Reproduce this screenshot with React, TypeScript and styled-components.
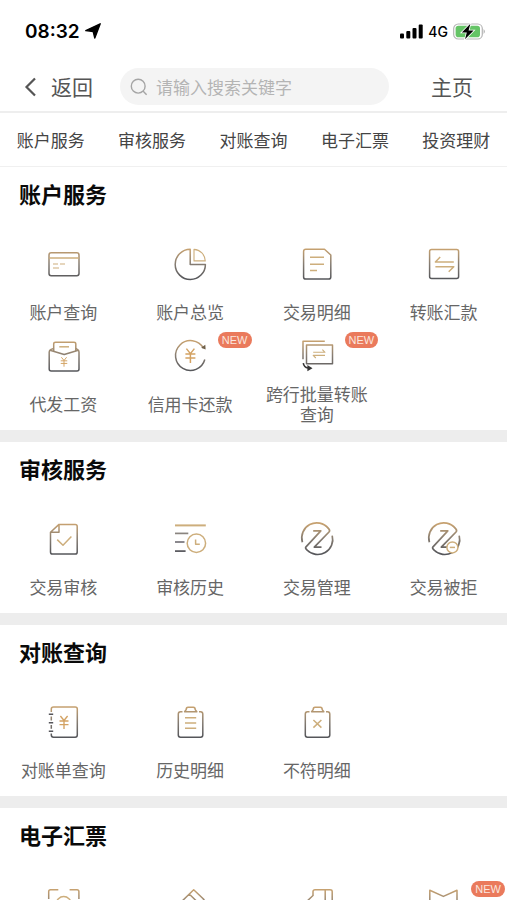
import React from "react";
import styled, { createGlobalStyle } from "styled-components";

const GlobalStyle = createGlobalStyle`
  * { box-sizing: border-box; }
  body {
    margin: 0;
    background: #fff;
    font-family: "Noto Sans CJK SC", "Liberation Sans", sans-serif;
    color: #666;
  }
  a { color: inherit; text-decoration: none; }
  button { font: inherit; color: inherit; background: none; border: 0; padding: 0; cursor: pointer; }
`;

const Screen = styled.div`
  display: flex;
  flex-direction: column;
  height: 100vh;
  overflow: hidden;
`;

const StatusBar = styled.header`
  display: flex;
  flex: none;
  align-items: center;
  justify-content: space-between;
  height: 62px;
  padding: 0 21px 0 25px;
  color: #000;
  font-family: Inter, "Liberation Sans", sans-serif;
`;

const StatusGroup = styled.div`
  display: flex;
  align-items: center;
  gap: 5px;
`;

const Clock = styled.time`
  font-size: 19px;
  font-weight: 600;
`;

const Network = styled.span`
  font-size: 14px;
  font-weight: 500;
`;

const TopBar = styled.div`
  display: flex;
  flex: none;
  align-items: center;
  height: 51px;
  padding: 0 34px 0 24px;
  border-bottom: 2px solid #eee;
  font-size: 21px;
  line-height: 28px;
  color: #555;
`;

const TopLabel = styled.span`
  padding-bottom: 2px;
`;

const HomeLink = styled.a`
  padding-bottom: 2px;
`;

const BackButton = styled.button`
  display: flex;
  align-items: center;
  gap: 15px;
  margin-right: 27px;
`;

const SearchBox = styled.label`
  display: flex;
  flex: 1;
  min-width: 0;
  align-items: center;
  gap: 8px;
  height: 37px;
  margin-right: 42px;
  padding: 0 11px 0 10px;
  border-radius: 19px;
  background: #f4f4f4;
`;

const SearchInput = styled.input`
  flex: 1;
  min-width: 0;
  padding: 0;
  border: 0;
  outline: 0;
  background: none;
  font: inherit;
  font-size: 17px;
  line-height: 24px;
  color: #555;
  &::placeholder { color: #b4b4b4; opacity: 1; }
`;

const Tabs = styled.nav`
  display: grid;
  flex: none;
  grid-template-columns: repeat(5, 1fr);
  align-items: center;
  height: 54px;
  border-bottom: 1px solid #f0f0f0;
  font-size: 17px;
  line-height: 24px;
  text-align: center;
  white-space: nowrap;
  color: #444;
`;

const Content = styled.main`
  flex: 1;
  min-height: 0;
  overflow-y: auto;
  scrollbar-width: none;
`;

const Section = styled.section`
  border-bottom: 12px solid #ededed;
`;

const SectionTitle = styled.h2`
  margin: 0;
  padding: 10px 19px 0;
  font-size: 22px;
  line-height: 32px;
  font-weight: 600;
  color: #0a0a0a;
`;

const Services = styled.div`
  display: grid;
  grid-template-columns: repeat(4, 1fr);
  padding-top: 37px;
`;

const Service = styled.a`
  position: relative;
  display: flex;
  flex-direction: column;
  align-items: center;
  gap: 10px;
  padding-bottom: 6px;
`;

const ServiceLabel = styled.span`
  display: flex;
  align-items: center;
  max-width: 108px;
  min-height: 40px;
  font-size: 17px;
  line-height: 20px;
  text-align: center;
`;

const NewBadge = styled.span`
  position: absolute;
  top: -6px;
  right: 2px;
  height: 16px;
  padding: 0 4px;
  border-radius: 8px;
  background: #ea7a5c;
  color: #fbe6df;
  font-family: "Liberation Sans", sans-serif;
  font-size: 11px;
  line-height: 16px;
`;

const GOLD = "#cdae7c";
const DARK = "#55555a";

const Yen = ({ x, y, s = 1 }: { x: number; y: number; s?: number }) => (
  <path
    transform={`translate(${x} ${y}) scale(${s})`}
    d="M-4 -7 L0 -2 L4 -7 M-5 -1.5 H5 M-5 2.5 H5 M0 -2 V7.5"
    stroke="#d3a263"
  />
);

const zMark = (
  <path
    strokeWidth="1.7"
    d="M3.4 21.2 A15 15 0 0 1 29.4 7.4 Q31.4 9.4 30 11 L15.3 26.2 H22.5 M33.2 14.6 A15 15 0 0 1 8 29 Q5.8 27.2 7 25.8 L21.8 9.8 H14.2"
  />
);

const clipboard = (
  <>
    <path d="M10.5 7.7 H8.5 Q6.3 7.7 6.3 10 V31 Q6.3 33.2 8.5 33.2 H28.6 Q30.8 33.2 30.8 31 V10 Q30.8 7.7 28.6 7.7 H27" />
    <path d="M12.6 7.8 L14.2 5.6 Q14.2 3.3 16 3.3 H21.4 Q23.2 3.3 23.2 5.6 L24.8 7.8 Z" />
  </>
);

const drawings: Record<string, React.ReactNode> = {
  card: (
    <>
      <rect x="4" y="6.8" width="30" height="23" rx="2.2" />
      <path d="M4 12 H34" stroke={GOLD} />
      <path d="M8 18 H13 M15 18 H20 M8 22 H14" stroke={GOLD} strokeWidth="1.1" />
    </>
  ),
  pie: (
    <>
      <path d="M18.2 3.3 A15.1 15.1 0 1 0 33.4 18.4 H18.2 Z" />
      <path d="M22 14.9 V3.4 A12 12 0 0 1 33.3 14.9 Z" stroke={GOLD} strokeWidth="1.1" />
    </>
  ),
  statement: (
    <>
      <path d="M6.8 3.3 H25.5 L31.8 9 V31 Q31.8 33.1 29.5 33.1 H6.8 Q4.6 33.1 4.6 31 V5.5 Q4.6 3.3 6.8 3.3 Z" />
      <path d="M11 11.3 H25 M11 18.3 H25 M11 24.4 H18" stroke={GOLD} />
    </>
  ),
  transfer: (
    <>
      <rect x="3.6" y="3.6" width="29" height="29" rx="2" />
      <path d="M14.2 11 L9.4 16 H27.8 M9.4 20.7 H27.8 L22.7 25.7" stroke={GOLD} />
    </>
  ),
  salary: (
    <>
      <path d="M8.7 13 V6 Q8.7 4.3 10.5 4.3 H29 Q30.8 4.3 30.8 6 V13" />
      <path d="M8.7 10.5 L6 11.4 Q4.2 12.2 4.2 14 V31 Q4.2 33 6.2 33 H32 Q34 33 34 31 V14 Q34 12.2 32.4 11.4 L30.8 10.5 M5 12.2 L19.2 16.5 L33.3 12.2" />
      <path d="M14.3 8.8 H24" stroke={GOLD} />
      <Yen x={19} y={23.8} s={0.65} />
    </>
  ),
  repay: (
    <>
      <path d="M32.8 21.5 A14.9 14.9 0 1 1 31.4 10.2" />
      <path d="M33.3 6.8 L33.6 11.6 L29.2 9.8 Z" fill="#6f5f48" stroke="none" />
      <Yen x={18.4} y={17.6} />
    </>
  ),
  batch: (
    <>
      <path d="M4 21.2 V3.3 H25.8" />
      <rect x="7.5" y="7" width="26" height="18.8" />
      <path d="M14.2 14.3 H26 L23.4 11.6 M26 17.4 H14.2 L16.8 20" stroke={GOLD} strokeWidth="1.1" />
      <path d="M4.3 25.2 Q5 29.6 9 30" stroke="#333" strokeWidth="1.6" />
      <path d="M8.4 27 L13.5 30.2 L8.4 33.2 Z" fill="#333" stroke="none" />
    </>
  ),
  audit: (
    <>
      <path d="M14 3.4 H30.2 Q32.2 3.4 32.2 5.4 V31 Q32.2 33.1 30.2 33.1 H7.5 Q5.5 33.1 5.5 31 V11.3 Z M14 3.4 V11.3 H5.5" />
      <path d="M12.2 18.6 L18 24.2 L26.4 15.4" stroke={GOLD} />
    </>
  ),
  history: (
    <>
      <path d="M3 4.4 H33.8" stroke={GOLD} strokeWidth="2" />
      <path d="M3 12.4 H16.3" stroke="#8a847f" strokeWidth="1.7" />
      <path d="M3 21 H12.5" stroke="#77747a" strokeWidth="1.7" />
      <path d="M3 30.1 H13.6" stroke={DARK} strokeWidth="1.7" />
      <circle cx="24.4" cy="22.3" r="9.2" stroke={GOLD} />
      <path d="M23.6 18.6 V23.2 H27.8" stroke={GOLD} />
    </>
  ),
  manage: zMark,
  rejected: (
    <>
      {zMark}
      <circle cx="26.4" cy="26.4" r="5.5" stroke={GOLD} fill="#fff" />
      <path d="M23.8 26.4 H29" stroke={GOLD} />
    </>
  ),
  ledger: (
    <>
      <path d="M6.3 8 V5 Q6.3 2.9 8.5 2.9 H30.2 Q32.3 2.9 32.3 5 V31 Q32.3 33.2 30.2 33.2 H8.5 Q6.3 33.2 6.3 31 V29.5 M6.3 12.6 V16.4 M6.3 21 V24.8" />
      <path d="M3.8 10.3 H8.2 M3.8 18.7 H8.2 M3.8 27.2 H8.2" stroke={DARK} />
      <Yen x={19} y={18.3} s={0.9} />
    </>
  ),
  clipList: (
    <>
      {clipboard}
      <path d="M13 13.8 H24.2 M13 19 H24.2 M13 24.2 H24.2" stroke={GOLD} />
    </>
  ),
  clipCross: (
    <>
      {clipboard}
      <path d="M14.4 16 L22.4 23.6 M22.4 16 L14.4 23.6" stroke={GOLD} />
    </>
  ),
  scan: (
    <>
      <path d="M13.3 2.8 H5.5 Q3.7 2.8 3.7 4.6 V12 M24.6 2.8 H32 Q33.9 2.8 33.9 4.6 V12 M3.7 24 V33 H13 M33.9 24 V33 H24.6" />
      <circle cx="18.7" cy="17" r="7.4" stroke={GOLD} />
    </>
  ),
  pen: <path d="M21.7 2.8 L32 12.5 L13 32 H4 V20 Z M17.2 7 L27.5 17" />,
  scroll: <path d="M14 9 V4.5 Q14 2.8 16 2.8 H31 Q33.2 2.8 33.2 4.5 V33 H5 V17 L14 8.5 M26.2 2.8 V14" />,
  ribbon: <path d="M3.8 33 V3.3 L17.4 9.4 L31 3.3 V33 Z" />,
};

const ServiceIcon = ({ name }: { name: string }) => (
  <svg
    width="36"
    height="36"
    viewBox="0 0 36 36"
    fill="none"
    stroke={`url(#tone-${name})`}
    strokeWidth="1.5"
    strokeLinejoin="round"
    aria-hidden="true"
  >
    <defs>
      <linearGradient id={`tone-${name}`} gradientUnits="userSpaceOnUse" x1="0" y1="3" x2="0" y2="33">
        <stop offset="0" stopColor="#c6a170" />
        <stop offset="0.5" stopColor="#857c72" />
        <stop offset="1" stopColor="#55565a" />
      </linearGradient>
    </defs>
    {drawings[name]}
  </svg>
);

type Item = { icon: string; label?: string; isNew?: boolean };

const sections: { id: string; title: string; items: Item[] }[] = [
  {
    id: "account",
    title: "账户服务",
    items: [
      { icon: "card", label: "账户查询" },
      { icon: "pie", label: "账户总览" },
      { icon: "statement", label: "交易明细" },
      { icon: "transfer", label: "转账汇款" },
      { icon: "salary", label: "代发工资" },
      { icon: "repay", label: "信用卡还款", isNew: true },
      { icon: "batch", label: "跨行批量转账查询", isNew: true },
    ],
  },
  {
    id: "audit",
    title: "审核服务",
    items: [
      { icon: "audit", label: "交易审核" },
      { icon: "history", label: "审核历史" },
      { icon: "manage", label: "交易管理" },
      { icon: "rejected", label: "交易被拒" },
    ],
  },
  {
    id: "reconcile",
    title: "对账查询",
    items: [
      { icon: "ledger", label: "对账单查询" },
      { icon: "clipList", label: "历史明细" },
      { icon: "clipCross", label: "不符明细" },
    ],
  },
  {
    id: "draft",
    title: "电子汇票",
    items: [{ icon: "scan" }, { icon: "pen" }, { icon: "scroll" }, { icon: "ribbon", isNew: true }],
  },
];

const tabs = [
  ["account", "账户服务"],
  ["audit", "审核服务"],
  ["reconcile", "对账查询"],
  ["draft", "电子汇票"],
  ["invest", "投资理财"],
];

export default function App() {
  return (
    <Screen>
      <GlobalStyle />
      <StatusBar>
        <StatusGroup>
          <Clock>08:32</Clock>
          <svg width="16" height="16" viewBox="0 0 16 16" aria-hidden="true">
            <path d="M15.2 0.8 L9.8 15 L8.2 8.6 L0.8 7.6 Z" fill="#000" stroke="#000" strokeWidth="1.4" strokeLinejoin="round" />
          </svg>
        </StatusGroup>
        <StatusGroup>
          <svg width="23" height="15" viewBox="0 0 23 15" aria-hidden="true">
            <rect x="0" y="9.5" width="4" height="5" rx="1" />
            <rect x="6.3" y="7" width="4" height="7.5" rx="1" />
            <rect x="12.5" y="4" width="4" height="10.5" rx="1" />
            <rect x="18.7" y="0.5" width="4" height="14" rx="1" />
          </svg>
          <Network>4G</Network>
          <svg width="33" height="17" viewBox="0 0 33 17" aria-hidden="true">
            <rect x="0.7" y="1" width="28.6" height="15" rx="4.6" fill="#fff" stroke="#b4b4b4" strokeWidth="1.2" />
            <rect x="2.6" y="2.8" width="24.4" height="11.4" rx="2.8" fill="#65c466" />
            <path d="M30.6 6 Q33 8.5 30.6 11 Z" fill="#a8a8a8" />
            <path
              d="M17.4 0.8 L8.8 9.5 H13.8 L12 16.2 L20.6 7.5 H15.6 Z"
              fill="#000"
              stroke="#fff"
              strokeWidth="1.6"
              paintOrder="stroke"
            />
          </svg>
        </StatusGroup>
      </StatusBar>

      <TopBar>
        <BackButton type="button">
          <svg width="12" height="20" viewBox="0 0 12 20" fill="none" stroke="#555" strokeWidth="2.2" aria-hidden="true">
            <path d="M11 1.5 L2.5 10 L11 18.5" />
          </svg>
          <TopLabel>返回</TopLabel>
        </BackButton>
        <SearchBox>
          <svg width="18" height="18" viewBox="0 0 18 18" fill="none" stroke="#a5a5a5" strokeWidth="1.4" aria-hidden="true">
            <circle cx="8.2" cy="8.2" r="6.9" />
            <path d="M13 13 L16.6 16.8" />
          </svg>
          <SearchInput type="search" placeholder="请输入搜索关键字" aria-label="搜索" />
        </SearchBox>
        <HomeLink href="#home">主页</HomeLink>
      </TopBar>

      <Tabs>
        {tabs.map(([id, label]) => (
          <a key={id} href={`#${id}`}>
            {label}
          </a>
        ))}
      </Tabs>

      <Content>
        {sections.map((section) => (
          <Section key={section.id} id={section.id}>
            <SectionTitle>{section.title}</SectionTitle>
            <Services>
              {section.items.map((item) => (
                <Service key={item.icon} href={`#${item.icon}`} aria-label={item.label ?? section.title}>
                  <ServiceIcon name={item.icon} />
                  <ServiceLabel>{item.label}</ServiceLabel>
                  {item.isNew && <NewBadge>NEW</NewBadge>}
                </Service>
              ))}
            </Services>
          </Section>
        ))}
      </Content>
    </Screen>
  );
}
